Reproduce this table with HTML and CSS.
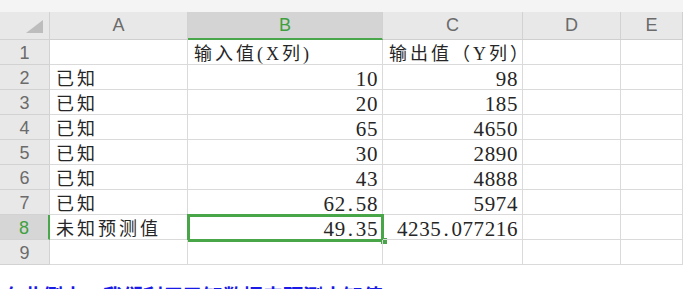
FILE: index.html
```html
<!DOCTYPE html>
<html lang="zh-CN">
<head>
<meta charset="utf-8">
<title>Sheet</title>
<link rel="stylesheet" href="styles.css">
</head>
<body>
<div class="sheet">
  <div class="topstrip"></div>
  <div class="grid">
    <div class="corner"><svg width="17" height="13" viewBox="0 0 17 13"><polygon points="17,0 17,13 0,13" fill="#bdbdbd"/></svg></div>
    <div class="ch">A</div>
    <div class="ch ch-sel">B</div>
    <div class="ch">C</div>
    <div class="ch">D</div>
    <div class="ch">E</div>

    <div class="rh">1</div>
    <div class="c"></div>
    <div class="c txt">输入值(X列)</div>
    <div class="c txt">输出值（Y列）</div>
    <div class="c"></div><div class="c"></div>

    <div class="rh">2</div>
    <div class="c txt">已知</div>
    <div class="c num">10</div>
    <div class="c num">98</div>
    <div class="c"></div><div class="c"></div>

    <div class="rh">3</div>
    <div class="c txt">已知</div>
    <div class="c num">20</div>
    <div class="c num">185</div>
    <div class="c"></div><div class="c"></div>

    <div class="rh">4</div>
    <div class="c txt">已知</div>
    <div class="c num">65</div>
    <div class="c num">4650</div>
    <div class="c"></div><div class="c"></div>

    <div class="rh">5</div>
    <div class="c txt">已知</div>
    <div class="c num">30</div>
    <div class="c num">2890</div>
    <div class="c"></div><div class="c"></div>

    <div class="rh">6</div>
    <div class="c txt">已知</div>
    <div class="c num">43</div>
    <div class="c num">4888</div>
    <div class="c"></div><div class="c"></div>

    <div class="rh">7</div>
    <div class="c txt">已知</div>
    <div class="c num">62<span class="dot">.</span>58</div>
    <div class="c num">5974</div>
    <div class="c"></div><div class="c"></div>

    <div class="rh rh-sel">8</div>
    <div class="c txt">未知预测值</div>
    <div class="c num active">49<span class="dot">.</span>35<span class="frame"></span><span class="handle"></span></div>
    <div class="c num">4235<span class="dot">.</span>077216</div>
    <div class="c"></div><div class="c"></div>

    <div class="rh">9</div>
    <div class="c"></div>
    <div class="c"></div>
    <div class="c"></div>
    <div class="c"></div><div class="c"></div>
  </div>
  <p class="note">在此例中，我们利用已知数据来预测未知值：</p>
</div>
</body>
</html>
```
FILE: styles.css
```css
html, body {
  margin: 0;
  padding: 0;
  background: #ffffff;
}
.sheet {
  width: 683px;
  overflow: hidden;
}
.topstrip {
  height: 12px;
  background: #f4f4f4;
}
.grid {
  display: grid;
  grid-template-columns: 50px 138px 195px 140px 98px 62px;
  grid-template-rows: 28px repeat(9, 25px);
}
.corner {
  background: #e8e8e8;
  border-right: 1px solid #d2d2d2;
  border-bottom: 1px solid #d2d2d2;
  box-sizing: border-box;
  display: flex;
  align-items: flex-start;
  justify-content: flex-end;
  padding: 8px 6px 0 0;
}
.ch {
  background: #e8e8e8;
  border-right: 1px solid #d2d2d2;
  border-bottom: 1px solid #cfcfcf;
  box-sizing: border-box;
  font-family: "Liberation Sans", Arial, sans-serif;
  font-size: 18px;
  color: #6b6b6b;
  text-align: center;
  line-height: 27px;
}
.ch-sel {
  background: #d4d4d4;
  color: #3fa03f;
  border-bottom: 2px solid #4aa64a;
  line-height: 26px;
}
.rh {
  background: #e8e8e8;
  border-right: 1px solid #d2d2d2;
  border-bottom: 1px solid #d2d2d2;
  box-sizing: border-box;
  font-family: "Liberation Sans", Arial, sans-serif;
  font-size: 18px;
  color: #6b6b6b;
  text-align: center;
  line-height: 21px;
  padding-top: 3px;
}
.rh-sel {
  background: #d6d6d6;
  color: #3fa03f;
  border-right: 2px solid #4aa64a;
}
.c {
  border-right: 1px solid #dadada;
  border-bottom: 1px solid #dadada;
  box-sizing: border-box;
  white-space: nowrap;
  color: #262626;
  font-family: "Liberation Serif", "Noto Sans CJK SC", serif;
  line-height: 21px;
  padding-top: 4px;
  position: relative;
}
.txt {
  font-size: 18px;
  letter-spacing: 3px;
  padding-left: 6px;
}
.num {
  font-size: 21px;
  letter-spacing: 0.6px;
  text-align: right;
  padding-right: 4px;
}
.dot {
  display: inline-block;
  width: 10px;
  text-align: center;
}
.active .frame {
  position: absolute;
  left: -1px;
  top: -1px;
  width: 197px;
  height: 28px;
  box-sizing: border-box;
  border: 3px solid #48a548;
}
.active .handle {
  position: absolute;
  left: 193px;
  top: 23px;
  width: 6px;
  height: 6px;
  background: #48a548;
}
.note {
  margin: 21px 0 0 3px;
  font-family: "Noto Sans CJK SC", sans-serif;
  font-weight: bold;
  font-size: 20px;
  line-height: 20px;
  color: #1a1ae6;
  white-space: nowrap;
}
```
